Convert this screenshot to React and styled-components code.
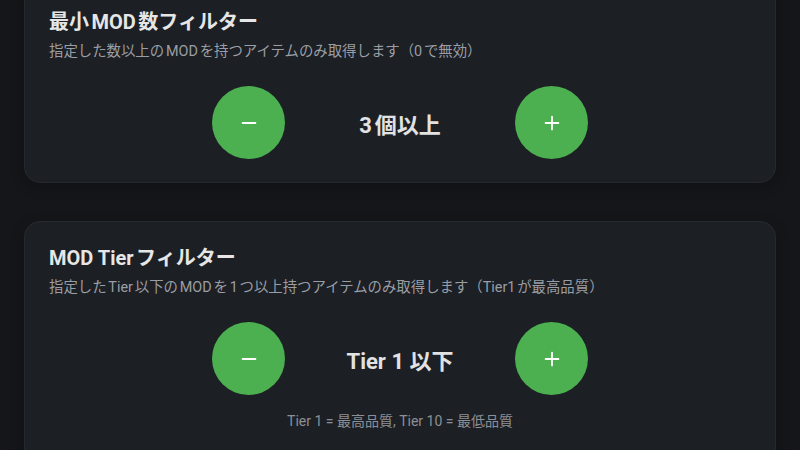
import React, { useState } from "react";
import styled, { createGlobalStyle } from "styled-components";
import { Minus, Plus } from "lucide-react";

const Global = createGlobalStyle`
  html, body { margin: 0; padding: 0; background: #14161a; }
  body {
    font-family: Roboto, "Noto Sans CJK JP", sans-serif;
    color: #e4e4e4;
    overflow: hidden;
    text-autospace: normal;
  }
`;

const Page = styled.div`
  width: 800px;
  height: 450px;
  overflow: hidden;
  background: #14161a;
  box-sizing: border-box;
  padding: 0 24px;
`;

const Stack = styled.div`
  display: flex;
  flex-direction: column;
  gap: 38px;
  margin-top: -15px;
`;

const Card = styled.section`
  background: #1c1f24;
  border: 1px solid #262a30;
  border-radius: 16px;
  padding: 23px 24px ${(p) => p.$bottom || 23}px;
  box-shadow: 0 4px 14px rgba(0, 0, 0, 0.25);
`;

const Title = styled.h2`
  margin: 0;
  font-size: 20px;
  line-height: 26px;
  font-weight: 700;
  color: #e6e6e6;
`;

const Desc = styled.p`
  margin: 7px 0 0;
  font-size: 14.4px;
  line-height: 20px;
  color: #9a9ea4;
`;

const Stepper = styled.div`
  margin-top: 24px;
  display: flex;
  justify-content: center;
  align-items: center;
  gap: 40px;
`;

const RoundButton = styled.button`
  width: 73px;
  height: 73px;
  border-radius: 50%;
  border: none;
  background: #4caf50;
  color: #fff;
  display: flex;
  align-items: center;
  justify-content: center;
  padding: 0;
  cursor: pointer;
`;

const Value = styled.div`
  min-width: 150px;
  text-align: center;
  font-size: 22px;
  font-weight: 700;
  color: #e2e2e2;
`;

const Hint = styled.div`
  margin-top: 16px;
  text-align: center;
  font-size: 14px;
  line-height: 20px;
  color: #8c9096;
`;

function StepperRow({ label, onDec, onInc }) {
  return (
    <Stepper>
      <RoundButton onClick={onDec} aria-label="decrease">
        <Minus size={22} strokeWidth={2} />
      </RoundButton>
      <Value>{label}</Value>
      <RoundButton onClick={onInc} aria-label="increase">
        <Plus size={22} strokeWidth={2} />
      </RoundButton>
    </Stepper>
  );
}

export default function App() {
  const [minMods, setMinMods] = useState(3);
  const [tier, setTier] = useState(1);
  return (
    <>
      <Global />
      <Page>
        <Stack>
          <Card>
            <Title>最小MOD数フィルター</Title>
            <Desc>指定した数以上のMODを持つアイテムのみ取得します（0で無効）</Desc>
            <StepperRow
              label={`${minMods}個以上`}
              onDec={() => setMinMods((v) => Math.max(0, v - 1))}
              onInc={() => setMinMods((v) => v + 1)}
            />
          </Card>
          <Card $bottom={32}>
            <Title>MOD Tierフィルター</Title>
            <Desc>指定したTier以下のMODを1つ以上持つアイテムのみ取得します（Tier1が最高品質）</Desc>
            <StepperRow
              label={`Tier ${tier} 以下`}
              onDec={() => setTier((v) => Math.max(1, v - 1))}
              onInc={() => setTier((v) => Math.min(10, v + 1))}
            />
            <Hint>Tier 1 = 最高品質, Tier 10 = 最低品質</Hint>
          </Card>
        </Stack>
      </Page>
    </>
  );
}
